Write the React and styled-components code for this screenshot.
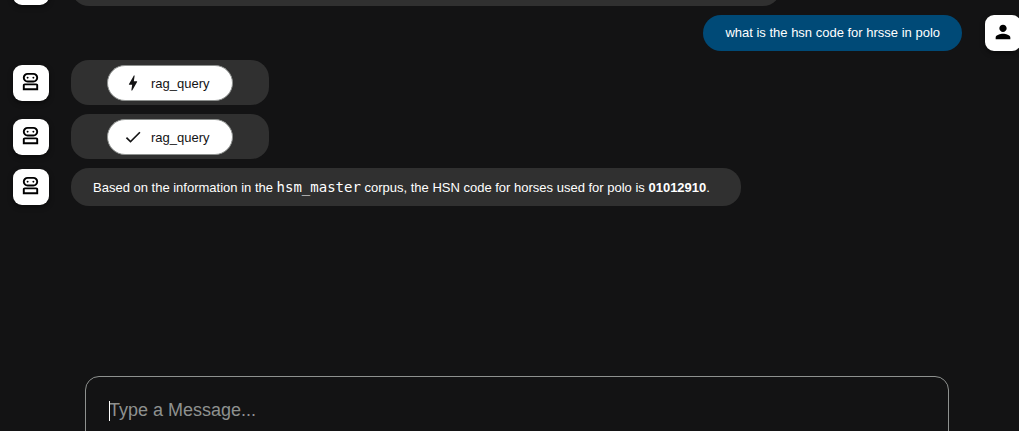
import React from "react";
import styled, { createGlobalStyle } from "styled-components";

const GlobalStyle = createGlobalStyle`
  * { box-sizing: border-box; }
  body {
    margin: 0;
    overflow: hidden;
    background: #131314;
    color: #fff;
    font-family: "Liberation Sans", Arial, sans-serif;
    font-size: 13px;
  }
`;

const Page = styled.main`
  display: flex;
  flex-direction: column;
  width: calc(100% + 15px);
  height: 100vh;
`;

/* The conversation is scrolled, so its first message is mostly above the window. */
const Messages = styled.section`
  flex: 1;
  min-height: 0;
  display: flex;
  flex-direction: column;
  gap: 9px;
  margin-top: -32px;
  padding: 0 13px;
`;

const Message = styled.article`
  display: flex;
  align-items: center;
  gap: ${(p) => (p.$user ? 23 : 22)}px;
  justify-content: ${(p) => (p.$user ? "flex-end" : "flex-start")};
`;

const Avatar = styled.div`
  flex: none;
  display: flex;
  justify-content: center;
  width: 36px;
  height: 36px;
  padding: ${(p) => (p.$user ? "6px 0 0" : "5px 1px 0 0")};
  border-radius: 9px;
  background: #fff;
  color: #000;
  box-shadow: 0 2px 5px rgba(0, 0, 0, 0.5);
`;

const Bubble = styled.div`
  display: flex;
  align-items: center;
  min-height: ${(p) => (p.$user ? 36 : 38)}px;
  width: ${(p) => (p.$wide ? "710px" : "auto")};
  padding: ${(p) => (p.$tool ? "5px 36px 4px" : p.$user ? "0 22px" : "0 31px 0 22px")};
  border-radius: 18px;
  background: ${(p) => (p.$user ? "#004a77" : "#303030")};
`;

const Text = styled.p`
  margin: 0;
  line-height: 18px;
`;

const Code = styled.code`
  font-family: "DejaVu Sans Mono", monospace;
  font-size: 14px;
`;

const ToolButton = styled.button`
  display: flex;
  align-items: center;
  gap: 8px;
  width: 126px;
  height: 36px;
  padding: 0 0 0 15px;
  border: 1px solid #8e918f;
  border-radius: 18px;
  background: #fff;
  color: #131314;
  font: inherit;
`;

const Icon = styled.svg`
  flex: none;
  display: block;
  width: ${(p) => p.$size}px;
  height: ${(p) => p.$size}px;
  fill: currentColor;
`;

const Composer = styled.form`
  flex: none;
  position: relative;
  height: 120px;
  margin: 0 85px -65px;
  padding: 21px 23px;
  border: 1px solid #8e918f;
  border-radius: 14px;
`;

const Input = styled.textarea`
  display: block;
  width: 100%;
  height: 25px;
  padding: 0;
  border: 0;
  outline: 0;
  resize: none;
  background: transparent;
  color: #fff;
  caret-color: transparent;
  font: 18px/25px "Liberation Sans", Arial, sans-serif;
  &::placeholder { color: #8e918f; opacity: 1; }
`;

const Caret = styled.span`
  position: absolute;
  top: 24px;
  left: 23px;
  width: 1px;
  height: 20px;
  background: #fff;
`;

const Robot = () => (
  <Avatar>
    <Icon $size={23} viewBox="0 -960 960 960" aria-hidden="true">
      <path d="M160-120v-200q0-33 23.500-56.500T240-400h480q33 0 56.500 23.500T800-320v200H160Zm200-320q-83 0-141.500-58.500T160-640q0-83 58.500-141.500T360-840h240q83 0 141.500 58.500T800-640q0 83-58.500 141.500T600-440H360ZM240-200h480v-120H240v120Zm120-320h240q50 0 85-35t35-85q0-50-35-85t-85-35H360q-50 0-85 35t-35 85q0 50 35 85t85 35Zm0-80q17 0 28.500-11.500T400-640q0-17-11.500-28.500T360-680q-17 0-28.500 11.500T320-640q0 17 11.500 28.500T360-600Zm240 0q17 0 28.500-11.500T640-640q0-17-11.500-28.500T600-680q-17 0-28.500 11.500T560-640q0 17 11.500 28.500T600-600Z" />
    </Icon>
  </Avatar>
);

const Person = () => (
  <Avatar $user>
    <Icon $size={22} viewBox="0 0 24 24" aria-hidden="true">
      <path d="M12 12c2.210 0 4-1.790 4-4s-1.790-4-4-4-4 1.790-4 4 1.790 4 4 4zm0 2c-2.670 0-8 1.340-8 4v2h16v-2c0-2.660-5.330-4-8-4z" />
    </Icon>
  </Avatar>
);

const BOLT =
  "M11 21h-1l1-7H7.500c-.58 0-.57-.32-.38-.66.19-.34.05-.08.07-.12C8.480 10.940 10.420 7.540 13 3h1l-1 7h3.500c.49 0 .56.33.47.51l-.07.15C12.960 17.550 11 21 11 21z";
const CHECK = "M9 16.170 4.830 12l-1.420 1.410L9 19 21 7l-1.410-1.410z";

const ToolMessage = ({ icon, name }) => (
  <Message>
    <Robot />
    <Bubble $tool>
      <ToolButton type="button">
        <Icon $size={20} viewBox="0 0 24 24" aria-hidden="true">
          <path d={icon} />
        </Icon>
        {name}
      </ToolButton>
    </Bubble>
  </Message>
);

export default function App() {
  return (
    <>
      <GlobalStyle />
      <Page>
        <Messages>
          <Message>
            <Robot />
            <Bubble $wide />
          </Message>
          <Message $user>
            <Bubble $user>
              <Text>what is the hsn code for hrsse in polo</Text>
            </Bubble>
            <Person />
          </Message>
          <ToolMessage icon={BOLT} name="rag_query" />
          <ToolMessage icon={CHECK} name="rag_query" />
          <Message>
            <Robot />
            <Bubble>
              <Text>
                Based on the information in the <Code>hsm_master</Code> corpus, the HSN code for
                horses used for polo is <strong>01012910</strong>.
              </Text>
            </Bubble>
          </Message>
        </Messages>
        <Composer>
          <Input aria-label="Message" placeholder="Type a Message..." />
          <Caret />
        </Composer>
      </Page>
    </>
  );
}
